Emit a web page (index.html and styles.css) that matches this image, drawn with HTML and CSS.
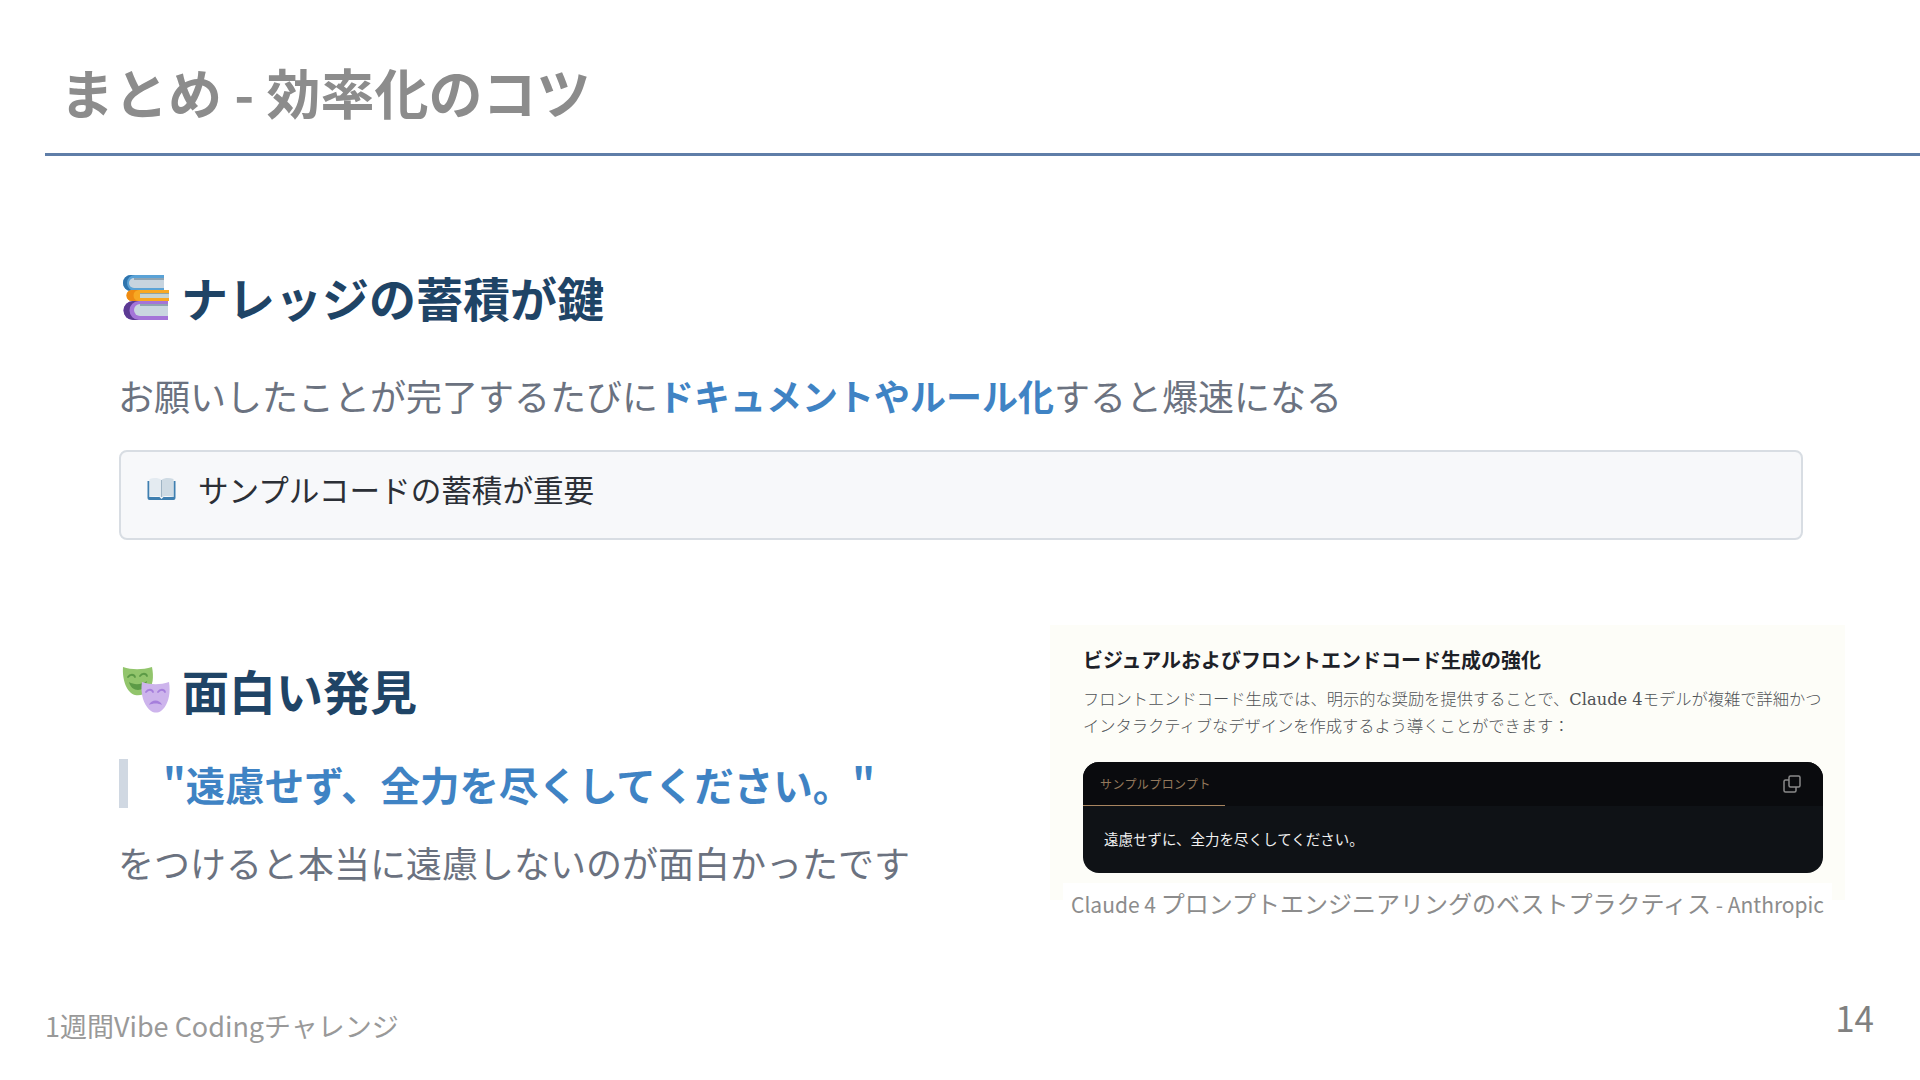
FILE: index.html
```html
<!DOCTYPE html>
<html lang="ja">
<head>
<meta charset="utf-8">
<title>まとめ - 効率化のコツ</title>
<link rel="stylesheet" href="styles.css">
</head>
<body>
<main class="slide">
  <header class="head">
    <h1 class="title">まとめ - 効率化のコツ</h1>
  </header>
  <div class="content">
    <section class="knowledge">
      <h2 class="heading">
        <svg class="ico-books" viewBox="0 0 46 46" aria-hidden="true">
          <path fill="#5aa2d6" d="M8 1h33v16H8a8 8 0 0 1 0-16z"/>
          <path fill="#2f74ad" d="M8 1h4a8 8 0 0 0 0 16H8A8 8 0 0 1 8 1z"/>
          <path fill="#c7d4df" d="M11 4h30v10H11a5 5 0 0 1 0-10z"/>
          <path fill="#8fa3b2" d="M11 4h30v2H11z"/>
          <path fill="#f7a823" d="M9 16h37v11H9a5.500 5.500 0 0 1 0-11z"/>
          <path fill="#ee8a12" d="M9 16h7a5.500 5.500 0 0 0 0 11H9a5.500 5.500 0 0 1 0-11z"/>
          <path fill="#c7d4d4" d="M17 19h29v5H17z"/>
          <path fill="#8fa3a2" d="M17 19h29v1H17z"/>
          <path fill="#a474d8" d="M10 27h35v19H10a9.500 9.500 0 0 1 0-19z"/>
          <path fill="#5c3a93" d="M10 27h6a9.500 9.500 0 0 0 0 19h-6a9.500 9.500 0 0 1 0-19z"/>
          <path fill="#c9d6e0" d="M17 30h28v12H17a6 6 0 0 1 0-12z"/>
          <path fill="#8fa3b2" d="M17 30h28v2H17z"/>
        </svg>
        <span>ナレッジの蓄積が鍵</span>
      </h2>
      <p class="body-line">お願いしたことが完了するたびに<strong class="accent">ドキュメントやルール化</strong>すると爆速になる</p>
      <div class="note">
        <svg class="ico-open" viewBox="0 0 30 24" aria-hidden="true">
          <path fill="#3f7fb0" d="M1 4h2v16h10l2 2 2-2h10V4h2v17a2 2 0 0 1-2 2H3a2 2 0 0 1-2-2z"/>
          <path fill="#e4ebf1" d="M3 2c4-1.500 9-1.500 12 1v17c-3-1.500-8-1.500-12 0z"/>
          <path fill="#cfdbe4" d="M27 2c-4-1.500-9-1.500-12 1v17c3-1.500 8-1.500 12 0z"/>
          <path fill="#9fb4c4" d="M14.500 3h1v17h-1z"/>
        </svg>
        <span>サンプルコードの蓄積が重要</span>
      </div>
    </section>
    <section class="discovery">
      <div class="discovery-text">
        <h2 class="heading">
          <svg class="ico-masks" viewBox="0 0 48 50" aria-hidden="true">
            <path fill="#92c56c" d="M1 3c9 3 19 3 29 0 2 10 1 19-4 24-4 4-9 5-13 4C5 29 0 16 1 3z"/>
            <path fill="none" stroke="#5c9a46" stroke-width="1.800" stroke-linecap="round" d="M6 13c2-3 6-3 7 0M18 12c2-3 6-3 7 0"/>
            <path fill="#5c9a46" d="M7 18c5 3 12 3 18-1-1 6-5 9-9 9s-8-3-9-8z"/>
            <path fill="#cdb4ec" d="M20 18c9 3 18 3 27 0 2 12-1 24-8 29-3 2-7 2-10 0-7-5-11-17-9-29z"/>
            <path fill="none" stroke="#a67fdc" stroke-width="1.800" stroke-linecap="round" d="M24 28c2-3 6-3 7 0M36 28c2-3 6-3 7 0"/>
            <path fill="#a67fdc" d="M27 41c2-6 11-6 13 0-4-2-9-2-13 0z"/>
          </svg>
          <span>面白い発見</span>
        </h2>
        <blockquote class="quote">"遠慮せず、全力を尽くしてください。"</blockquote>
        <p class="body-line">をつけると本当に遠慮しないのが面白かったです</p>
      </div>
      <figure class="shot">
        <div class="shot-panel">
          <h3 class="shot-title">ビジュアルおよびフロントエンドコード生成の強化</h3>
          <p class="shot-text">フロントエンドコード生成では、明示的な奨励を提供することで、Claude 4モデルが複雑で詳細かつ<br>インタラクティブなデザインを作成するよう導くことができます：</p>
          <div class="code">
            <div class="code-bar">
              <span class="code-tab">サンプルプロンプト</span>
              <svg class="ico-copy" viewBox="0 0 18 18" aria-hidden="true">
                <rect x="6" y="1" width="11" height="11" rx="1.500"/>
                <path d="M6 5H2.500A1.500 1.500 0 0 0 1 6.500v9A1.500 1.500 0 0 0 2.500 17h9a1.500 1.500 0 0 0 1.500-1.500V12"/>
              </svg>
            </div>
            <div class="code-body">遠慮せずに、全力を尽くしてください。</div>
          </div>
        </div>
        <figcaption class="caption"><span class="caption-latin">Claude 4 </span>プロンプトエンジニアリングのベストプラクティス<span class="caption-latin"> - Anthropic</span></figcaption>
      </figure>
    </section>
  </div>
  <footer class="foot">
    <span class="foot-name">1週間Vibe Codingチャレンジ</span>
    <span class="page">14</span>
  </footer>
</main>
</body>
</html>
```

FILE: styles.css
```css
* { box-sizing: border-box; }
html, body { margin: 0; padding: 0; }
body {
  width: 1920px;
  height: 1080px;
  overflow: hidden;
  background: #fff;
  font-family: "Noto Sans CJK JP", "Noto Sans", sans-serif;
}
.slide {
  width: 1920px;
  height: 1080px;
  display: flex;
  flex-direction: column;
}
.head {
  margin-left: 45px;
  height: 156px;
  padding: 50px 0 0 15px;
  border-bottom: 3px solid #5f7ea8;
}
.title {
  margin: 0;
  font-size: 54px;
  line-height: 84px;
  font-weight: 700;
  color: #8c8c8c;
}
.content {
  flex: 1;
  padding: 107px 75px 0 119px;
  display: flex;
  flex-direction: column;
}
.heading {
  margin: 0;
  display: flex;
  align-items: center;
  gap: 12px;
  font-size: 47px;
  line-height: 68px;
  font-weight: 700;
  color: #1f4466;
}
.ico-books { width: 46px; height: 46px; margin-left: 4px; }
.ico-masks { width: 48px; height: 50px; margin-left: 3px; margin-top: -2px; }
.body-line {
  margin: 0 0 0 -1px;
  font-size: 36px;
  line-height: 54px;
  color: #6b7280;
}
.knowledge .body-line { margin-top: 37px; }
.accent { font-weight: 700; color: #3f83c4; }
.note {
  width: 1684px;
  height: 90px;
  margin-top: 28px;
  padding: 0 0 13px 25px;
  display: flex;
  align-items: center;
  gap: 21px;
  font-size: 30.600px;
  color: #2b2f36;
  background: #f7f8fa;
  border: 2px solid #d8dde3;
  border-radius: 8px;
}
.ico-open { width: 31px; height: 24px; }
.discovery {
  display: flex;
  justify-content: space-between;
  margin-top: 85px;
}
.discovery-text { padding-top: 31px; }
.quote {
  margin: 35px 0 0;
  height: 49px;
  padding-left: 35px;
  border-left: 9px solid #d0d8e2;
  font-size: 39.500px;
  line-height: 49px;
  font-weight: 700;
  color: #3f83c4;
}
.discovery-text .body-line { margin-top: 27px; }
.shot {
  margin: 0;
  width: 795px;
  position: relative;
}
.shot-panel {
  height: 275px;
  padding: 21px 0 0 33px;
  background: #fdfdf8;
}
.shot-title {
  margin: 0;
  font-size: 20px;
  line-height: 28px;
  font-weight: 700;
  color: #1d2128;
}
.shot-text {
  margin: 12px 0 0;
  font-family: "DejaVu Serif", "Noto Sans CJK JP", serif;
  font-size: 16.250px;
  line-height: 27px;
  font-weight: 300;
  white-space: nowrap;
  color: #4f5256;
}
.code {
  margin-top: 22px;
  width: 740px;
  height: 111px;
  border-radius: 16px;
  overflow: hidden;
  background: #0f1216;
}
.code-bar {
  height: 44px;
  display: flex;
  align-items: center;
  justify-content: space-between;
  padding-right: 22px;
  background: #0a0b0e;
}
.code-tab {
  width: 142px;
  height: 44px;
  padding-left: 17px;
  font-size: 12px;
  line-height: 44px;
  letter-spacing: 0.400px;
  color: #94795c;
  border-bottom: 1px solid #a88560;
}
.ico-copy {
  width: 18px;
  height: 18px;
  fill: none;
  stroke: #8a8a8a;
  stroke-width: 1.500;
}
.code-body {
  padding: 22px 0 0 21px;
  font-size: 14.500px;
  line-height: 22px;
  color: #f0f0f0;
}
.caption {
  position: absolute;
  left: 13px;
  top: 258px;
  padding: 0 8px;
  font-size: 24px;
  line-height: 39px;
  white-space: nowrap;
  color: #8c8c8c;
  background: #fff;
}
.caption-latin { font-size: 21px; }
.foot {
  height: 80px;
  padding: 0 46px 0 45px;
  display: flex;
  justify-content: space-between;
  align-items: flex-start;
}
.foot-name {
  margin-top: 6px;
  font-size: 27px;
  line-height: 40px;
  color: #999;
}
.page {
  font-size: 35px;
  line-height: 34px;
  color: #808080;
}
```
